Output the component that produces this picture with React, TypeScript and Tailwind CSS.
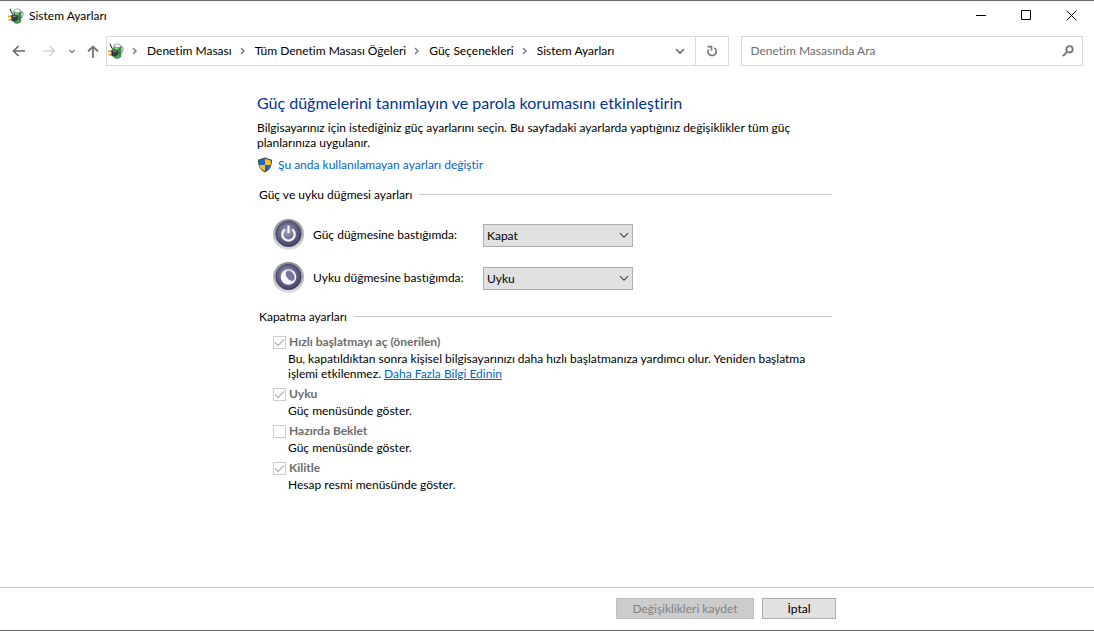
import { useState } from "react";
import type { ReactNode } from "react";

const PowerPlanIcon = () => (
  <svg className="size-4 shrink-0" viewBox="0 0 16 16" aria-hidden="true">
    <path d="M12.8 4 C15.8 3 15.8 7.5 13.2 10" stroke="#8a9096" strokeWidth="1.1" fill="none" />
    <path d="M6 3 L13 3 L12.8 13.5 C11 15.6 8 15.6 6.3 14.5 Z" fill="#3db444" stroke="#3c5540" strokeWidth="0.8" />
    <path d="M10.8 5.5 L12.3 5 L12 12.5 L10.8 13.5 Z" fill="#2c8a35" />
    <path d="M7 5 H9.5 V7 H7 Z" fill="#8cf08f" />
    <ellipse cx="9.4" cy="2.8" rx="3.5" ry="1.9" fill="#eef2ee" stroke="#7d8a80" strokeWidth="0.7" />
    <path d="M2 0.8 L3.4 4.2 L5.2 6.5" stroke="#444" strokeWidth="1.2" fill="none" />
    <path d="M0 8.3 H4 M0.5 11.7 H4.5" stroke="#d9a21b" strokeWidth="1.8" />
    <path d="M3.2 7 L7 6.2 C9.8 6.6 11 8.2 10.7 10 C10 12.7 7 13.8 5 13.6 L3.6 13 Z" fill="#38383d" />
    <path d="M5 8.3 L8.5 8" stroke="#a3a3aa" strokeWidth="1" />
  </svg>
);

const ShieldIcon = () => (
  <svg className="size-4 shrink-0" viewBox="0 0 16 16" aria-hidden="true">
    <path d="M8 0.5 L15 2.8 C15.3 9 12.5 13.5 8 15.5 C3.5 13.5 0.7 9 1 2.8 Z" fill="#4c4c4c" />
    <path d="M8 1.8 V8 H2.3 C2 6.5 2 5 2.1 3.7 Z" fill="#1769c9" />
    <path d="M8 1.8 V8 H13.7 C14 6.5 14 5 13.9 3.7 Z" fill="#fdbe2c" />
    <path d="M8 8 V14.3 C5 12.8 3 10.8 2.3 8 Z" fill="#fdbe2c" />
    <path d="M8 8 V14.3 C11 12.8 13 10.8 13.7 8 Z" fill="#1769c9" />
  </svg>
);

const RoundIcon = ({ id, children }: { id: string; children: ReactNode }) => (
  <svg className="size-8 shrink-0" viewBox="0 0 32 32" aria-hidden="true">
    <defs>
      <linearGradient id={`${id}-rim`} x1="0" y1="0" x2="0" y2="1">
        <stop offset="0" stopColor="#85858a" />
        <stop offset="1" stopColor="#e2e2e4" />
      </linearGradient>
      <radialGradient id={`${id}-face`} cx="0.45" cy="0.4" r="0.62">
        <stop offset="0" stopColor="#a3a3bd" />
        <stop offset="0.55" stopColor="#66668a" />
        <stop offset="1" stopColor="#3d3d5c" />
      </radialGradient>
    </defs>
    <circle cx="15.5" cy="16.5" r="15.5" fill={`url(#${id}-rim)`} />
    <circle cx="15.5" cy="16" r="12.6" fill={`url(#${id}-face)`} stroke="#45455f" />
    {children}
  </svg>
);

const Crumb = () => (
  <svg className="mx-2 h-2 w-[7px] shrink-0" viewBox="0 0 7 8" fill="none" stroke="#777" strokeWidth="1.4" aria-hidden="true">
    <path d="M1 1 L4 4 L1 7" />
  </svg>
);

const crumbs = ["Denetim Masası", "Tüm Denetim Masası Öğeleri", "Güç Seçenekleri", "Sistem Ayarları"];

const SectionTitle = ({ children }: { children: string }) => (
  <div className="flex items-center pl-0.5">
    <h2 className="leading-[15px]">{children}</h2>
    <div className="ml-[7px] h-px flex-1 bg-[#cacaca]" />
  </div>
);

type ActionRowProps = {
  id: string;
  label: string;
  initial: string;
  options: string[];
  icon: ReactNode;
};

const ActionRow = ({ id, label, initial, options, icon }: ActionRowProps) => {
  const [value, setValue] = useState(initial);

  return (
    <div className="flex items-center">
      {icon}
      <label htmlFor={id} className="ml-2 w-[170px] pt-0.5">
        {label}
      </label>
      <div className="relative mt-[3px]">
        <select
          id={id}
          value={value}
          onChange={(e) => setValue(e.target.value)}
          className="block h-[23px] w-[150px] appearance-none border border-[#adadad] bg-[#e1e1e1] pl-[3px]"
        >
          {options.map((option) => (
            <option key={option}>{option}</option>
          ))}
        </select>
        <svg className="pointer-events-none absolute top-2 right-1 h-[7px] w-[10px]" viewBox="0 0 10 7" fill="none" stroke="#444" strokeWidth="1.1">
          <path d="M1 1.2 L5 5.2 L9 1.2" />
        </svg>
      </div>
    </div>
  );
};

type ShutdownOptionProps = {
  id: string;
  label: string;
  checked?: boolean;
  children: ReactNode;
};

const ShutdownOption = ({ id, label, checked = false, children }: ShutdownOptionProps) => (
  <div>
    <div className="flex h-[18px] items-center gap-[3px]">
      <div className="relative size-[13px]">
        <input
          id={id}
          type="checkbox"
          defaultChecked={checked}
          disabled
          className="peer block size-[13px] appearance-none border border-[#ccc] bg-white"
        />
        <svg className="pointer-events-none absolute inset-0 hidden peer-checked:block" viewBox="0 0 13 13" fill="none" stroke="#b8b8b8" strokeWidth="1.3">
          <path d="M2 6.5 L5 9.5 L11 3.5" />
        </svg>
      </div>
      <label htmlFor={id} className="font-bold text-[#6d6d6d]">
        {label}
      </label>
    </div>
    <p className="pl-[15px] leading-[15px]">{children}</p>
  </div>
);

const App = () => {
  return (
    <div className="flex min-h-screen flex-col border-y border-[#6b6b6b] bg-white font-['Lato','Noto_Sans',sans-serif] text-[12px] text-black [font-variant-ligatures:none]">
      {/* Title bar */}
      <header className="flex h-[29px] items-center pl-2">
        <PowerPlanIcon />
        <h1 className="ml-[5px] flex-1">Sistem Ayarları</h1>
        <button type="button" aria-label="Simge durumuna küçült" className="flex h-full w-[45px] items-center justify-center">
          <svg className="size-[11px]" viewBox="0 0 11 11" stroke="#000">
            <path d="M0 5.5 H10" />
          </svg>
        </button>
        <button type="button" aria-label="Ekranı kapla" className="flex h-full w-[45px] items-center justify-center">
          <svg className="size-[11px]" viewBox="0 0 11 11" fill="none" stroke="#000">
            <path d="M0.5 0.5 H9.5 V9.5 H0.5 Z" />
          </svg>
        </button>
        <button type="button" aria-label="Kapat" className="flex h-full w-[45px] items-center justify-center">
          <svg className="size-[11px]" viewBox="0 0 11 11" fill="none" stroke="#000">
            <path d="M0.5 0.5 L10.5 10.5 M10.5 0.5 L0.5 10.5" />
          </svg>
        </button>
      </header>

      {/* Navigation */}
      <nav className="mt-1.5 flex h-[30px] items-center pr-[11px] pl-3">
        <button type="button" aria-label="Geri">
          <svg className="h-3 w-[14px]" viewBox="0 0 14 12" fill="none" stroke="#666" strokeWidth="1.6">
            <path d="M13 6 H1.5 M6.5 1 L1.5 6 L6.5 11" />
          </svg>
        </button>
        <button type="button" aria-label="İleri" className="ml-4">
          <svg className="h-3 w-[14px]" viewBox="0 0 14 12" fill="none" stroke="#d4d4d4" strokeWidth="1.6">
            <path d="M1 6 H12.5 M7.5 1 L12.5 6 L7.5 11" />
          </svg>
        </button>
        <button type="button" aria-label="Son konumlar" className="ml-3">
          <svg className="h-[5px] w-2" viewBox="0 0 8 5" fill="none" stroke="#888" strokeWidth="1.5">
            <path d="M1.5 1 L4 3.5 L6.5 1" />
          </svg>
        </button>
        <button type="button" aria-label="Yukarı" className="mr-[7px] ml-[11px]">
          <svg className="h-[13px] w-3" viewBox="0 0 12 13" fill="none" stroke="#777" strokeWidth="1.8">
            <path d="M6 13 V1.8 M1 6.5 L6 1.5 L11 6.5" />
          </svg>
        </button>

        <div className="flex h-full flex-[624] border border-[#d9d9d9]">
          <div className="flex flex-1 items-center pl-px">
            <PowerPlanIcon />
            {crumbs.map((crumb) => (
              <span key={crumb} className="flex items-center whitespace-nowrap">
                <Crumb />
                <a href="#">{crumb}</a>
              </span>
            ))}
          </div>
          <button type="button" aria-label="Önceki konumlar" className="px-2.5">
            <svg className="h-[7px] w-[10px]" viewBox="0 0 10 7" fill="none" stroke="#777" strokeWidth="1.7">
              <path d="M1 1.2 L5 5.2 L9 1.2" />
            </svg>
          </button>
          <button type="button" aria-label="Yenile" className="flex w-[33px] items-center justify-center border-l border-[#d9d9d9]">
            <svg className="size-3" viewBox="0 0 12 12" fill="none" stroke="#777" strokeWidth="1.6">
              <path d="M8.2 2.9 A4.1 4.1 0 1 1 2.6 4.4" />
              <path d="M1.5 1.6 H5.6 V5.6" />
            </svg>
          </button>
        </div>

        <div className="ml-3 flex h-full flex-[341] items-center border border-[#d9d9d9]">
          <input type="text" aria-label="Ara" placeholder="Denetim Masasında Ara" className="h-full min-w-0 flex-1 pb-0.5 pl-2 outline-none placeholder:text-[#6d6d6d]" />
          <svg className="mr-2 size-3" viewBox="0 0 12 12" fill="none" stroke="#777" aria-hidden="true">
            <circle cx="7.5" cy="4.3" r="3.2" strokeWidth="1.8" />
            <path d="M5.2 6.8 L0.8 11.2" strokeWidth="1.9" />
          </svg>
        </div>
      </nav>

      <main className="ml-[257px] max-w-[575px] flex-1 pt-[27px]">
        <h2 className="text-[16px] leading-5 text-[#003399]">Güç düğmelerini tanımlayın ve parola korumasını etkinleştirin</h2>
        <p className="mt-[7px] leading-[15px]">
          Bilgisayarınız için istediğiniz güç ayarlarını seçin. Bu sayfadaki ayarlarda yaptığınız değişiklikler tüm güç planlarınıza uygulanır.
        </p>
        <a href="#" className="mt-[7px] flex items-center gap-[5px] leading-4 text-[#0066cc]">
          <ShieldIcon />
          Şu anda kullanılamayan ayarları değiştir
        </a>

        <section className="mt-3.5">
          <SectionTitle>Güç ve uyku düğmesi ayarları</SectionTitle>
          <div className="mt-4 space-y-[11px] pl-4">
            <ActionRow
              id="power-button"
              label="Güç düğmesine bastığımda:"
              initial="Kapat"
              options={["Hiçbir şey yapma", "Uyku", "Kapat", "Ekranı kapat"]}
              icon={
                <RoundIcon id="power">
                  <path d="M11.9 11.4 A6.2 6.2 0 1 0 19.1 11.4" stroke="#f5f5fa" strokeWidth="2.2" fill="none" />
                  <path d="M15.5 7.5 V15" stroke="#f5f5fa" strokeWidth="2.2" />
                </RoundIcon>
              }
            />
            <ActionRow
              id="sleep-button"
              label="Uyku düğmesine bastığımda:"
              initial="Uyku"
              options={["Hiçbir şey yapma", "Uyku", "Kapat", "Ekranı kapat"]}
              icon={
                <RoundIcon id="sleep">
                  <circle cx="15.5" cy="16" r="7.8" fill="#f5f5fa" />
                  <ellipse cx="17.2" cy="14.7" rx="3.7" ry="5.8" transform="rotate(-35 17.2 14.7)" fill="#77779a" />
                </RoundIcon>
              }
            />
          </div>
        </section>

        <section className="mt-4">
          <SectionTitle>Kapatma ayarları</SectionTitle>
          <div className="mt-[9px] space-y-1 pl-4">
            <ShutdownOption id="fast-startup" label="Hızlı başlatmayı aç (önerilen)" checked>
              Bu, kapatıldıktan sonra kişisel bilgisayarınızı daha hızlı başlatmanıza yardımcı olur. Yeniden başlatma işlemi etkilenmez.{" "}
              <a href="#" className="inline-block text-[#0066cc] underline">
                Daha Fazla Bilgi Edinin
              </a>
            </ShutdownOption>
            <ShutdownOption id="sleep" label="Uyku" checked>
              Güç menüsünde göster.
            </ShutdownOption>
            <ShutdownOption id="hibernate" label="Hazırda Beklet">
              Güç menüsünde göster.
            </ShutdownOption>
            <ShutdownOption id="lock" label="Kilitle" checked>
              Hesap resmi menüsünde göster.
            </ShutdownOption>
          </div>
        </section>
      </main>

      <footer className="border-t border-[#cacaca] pt-2.5 pb-[11px]">
        <div className="ml-[257px] flex max-w-[579px] justify-end gap-2">
          <button type="button" disabled className="h-[21px] w-[138px] border border-[#bfbfbf] bg-[#ccc] leading-none text-[#838383]">
            Değişiklikleri kaydet
          </button>
          <button type="button" className="h-[21px] w-[74px] border border-[#adadad] bg-[#e1e1e1] leading-none">
            İptal
          </button>
        </div>
      </footer>
    </div>
  );
};

export default App;
